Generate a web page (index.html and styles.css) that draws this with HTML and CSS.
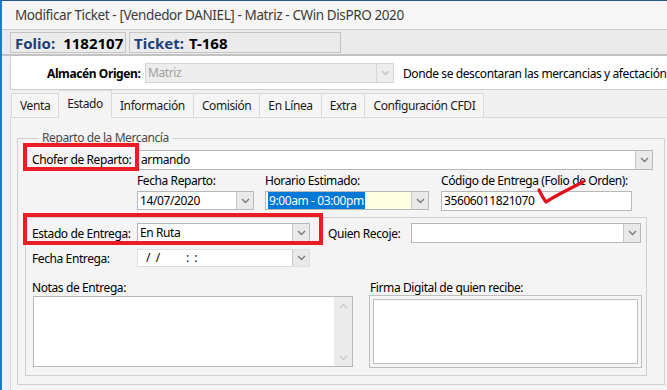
FILE: index.html
```html
<!DOCTYPE html>
<html lang="es">
  <head>
    <meta charset="UTF-8" />
    <title>Modificar Ticket</title>
    <link rel="stylesheet" href="styles.css">
  </head>
  <body>
    <div class="window">
      <div class="title-bar">Modificar Ticket - [Vendedor DANIEL] - Matriz - CWin DisPRO 2020</div>

      <!-- Folio / Ticket -->
      <div class="toolbar">
        <div class="info-box folio"><span class="key">Folio:</span><span class="val">1182107</span></div>
        <div class="info-box ticket"><span class="key">Ticket:</span><span class="val">T-168</span></div>
      </div>

      <!-- Almacen -->
      <div class="almacen-panel">
        <span class="almacen-label">Almacén Origen:</span>
        <div class="combo disabled almacen-combo">
          <span class="combo-text">Matriz</span>
          <span class="combo-btn"><svg width="9" height="6" viewBox="0 0 9 6"><path d="M1 1 L4.5 4.5 L8 1" fill="none" stroke="#c4c4c4" stroke-width="1.4"/></svg></span>
        </div>
        <span class="almacen-note">Donde se descontaran las mercancias y afectación de inventario</span>
      </div>

      <!-- Tabs -->
      <ul class="tabs">
        <li>Venta</li>
        <li class="active">Estado</li>
        <li>Información</li>
        <li>Comisión</li>
        <li>En Línea</li>
        <li>Extra</li>
        <li>Configuración CFDI</li>
      </ul>

      <div class="tab-panel">
        <fieldset class="group reparto">
          <legend>Reparto de la Mercancía</legend>

          <div class="row chofer-row">
            <span class="label">Chofer de Reparto:</span>
            <div class="combo chofer-combo">
              <span class="combo-text">armando</span>
              <span class="combo-btn"><svg width="9" height="6" viewBox="0 0 9 6"><path d="M1 1 L4.5 4.5 L8 1" fill="none" stroke="#7a7a7a" stroke-width="1.4"/></svg></span>
            </div>
          </div>

          <div class="row fecha-row">
            <div class="field fecha-field">
              <span class="label">Fecha Reparto:</span>
              <div class="combo">
                <span class="combo-text">14/07/2020</span>
                <span class="combo-btn"><svg width="9" height="6" viewBox="0 0 9 6"><path d="M1 1 L4.5 4.5 L8 1" fill="none" stroke="#7a7a7a" stroke-width="1.4"/></svg></span>
              </div>
            </div>
            <div class="field horario-field">
              <span class="label">Horario Estimado:</span>
              <div class="combo yellow">
                <span class="combo-text"><span class="selected">9:00am - 03:00pm</span></span>
                <span class="combo-btn"><svg width="9" height="6" viewBox="0 0 9 6"><path d="M1 1 L4.5 4.5 L8 1" fill="none" stroke="#7a7a7a" stroke-width="1.4"/></svg></span>
              </div>
            </div>
            <div class="field codigo-field">
              <span class="label">Código de Entrega (Folio de Orden):</span>
              <div class="textbox">35606011821070</div>
            </div>
          </div>

          <div class="group entrega">
            <div class="row estado-row">
              <span class="label">Estado de Entrega:</span>
              <div class="combo estado-combo">
                <span class="combo-text">En Ruta</span>
                <span class="combo-btn"><svg width="9" height="6" viewBox="0 0 9 6"><path d="M1 1 L4.5 4.5 L8 1" fill="none" stroke="#7a7a7a" stroke-width="1.4"/></svg></span>
              </div>
              <span class="label recoje-label">Quien Recoje:</span>
              <div class="combo recoje-combo">
                <span class="combo-text"></span>
                <span class="combo-btn"><svg width="9" height="6" viewBox="0 0 9 6"><path d="M1 1 L4.5 4.5 L8 1" fill="none" stroke="#7a7a7a" stroke-width="1.4"/></svg></span>
              </div>
            </div>

            <div class="row fecha-entrega-row">
              <span class="label">Fecha Entrega:</span>
              <div class="combo estado-combo">
                <span class="combo-text mask">&nbsp;/ /&nbsp;&nbsp;&nbsp;&nbsp;&nbsp;&nbsp;: :</span>
                <span class="combo-btn"><svg width="9" height="6" viewBox="0 0 9 6"><path d="M1 1 L4.5 4.5 L8 1" fill="none" stroke="#7a7a7a" stroke-width="1.4"/></svg></span>
              </div>
            </div>

            <div class="row notas-row">
              <div class="notas">
                <span class="label">Notas de Entrega:</span>
                <div class="memo">
                  <div class="memo-body"></div>
                  <div class="scrollbar">
                    <svg width="9" height="6" viewBox="0 0 9 6"><path d="M1 5 L4.5 1.5 L8 5" fill="none" stroke="#c8c8c8" stroke-width="1.4"/></svg>
                    <svg width="9" height="6" viewBox="0 0 9 6"><path d="M1 1 L4.5 4.5 L8 1" fill="none" stroke="#c8c8c8" stroke-width="1.4"/></svg>
                  </div>
                </div>
              </div>
              <div class="firma">
                <span class="label">Firma Digital de quien recibe:</span>
                <div class="firma-frame"><div class="firma-pad"></div></div>
              </div>
            </div>
          </div>

          <!-- red annotations drawn over the form -->
          <div class="mark mark-chofer"></div>
          <div class="mark mark-estado"></div>
          <svg class="check" width="52" height="28" viewBox="0 0 52 28">
            <path d="M4 11 C6 15 8 19 11 23 C18 18 30 12 48 3" fill="none" stroke="#e3101c" stroke-width="3.2" stroke-linecap="round" stroke-linejoin="round"/>
          </svg>
        </fieldset>
      </div>
    </div>
  </body>
</html>
```

FILE: styles.css
```css
/* Global */
* {
  margin: 0;
  padding: 0;
  box-sizing: border-box;
}

body {
  width: 667px;
  height: 390px;
  overflow: hidden;
  background-color: #f0f0f0;
  font-family: "Noto Sans", sans-serif;
  font-size: 12px;
  letter-spacing: -0.4px;
  color: #000;
}

.window {
  width: 690px;
  height: 390px;
  border-top: 1px solid #2b5797;
  border-left: 2px solid #1b7bd3;
  background-color: #f0f0f0;
}

/* Title */
.title-bar {
  height: 29px;
  padding-left: 13px;
  line-height: 29px;
  font-size: 13.5px;
  letter-spacing: -0.4px;
  color: #3b3b3b;
  background-color: #f6f6f6;
  border-bottom: 1px solid #c9c9c9;
}

/* Folio / Ticket */
.toolbar {
  display: flex;
  gap: 3px;
  height: 26px;
  padding: 2px 8px 0;
  background-color: #ebebeb;
  border-bottom: 2px solid #c2c2c2;
}

.info-box {
  display: flex;
  align-items: center;
  height: 21px;
  padding-left: 4px;
  border: 1px solid #c4c4c4;
  font-size: 15px;
  font-weight: 700;
  letter-spacing: 0;
}

.info-box .key {
  color: #1d3f7a;
  margin-right: 8px;
}

.folio {
  width: 116px;
}

.ticket {
  width: 212px;
}

.ticket .key {
  margin-right: 5px;
}

/* Almacen */
.almacen-panel {
  display: flex;
  align-items: center;
  height: 34px;
  margin-left: 8px;
  padding-left: 36px;
  background-color: #fff;
  border: 1px solid #cdcdcd;
  border-top: 1px solid #fff;
  white-space: nowrap;
  overflow: hidden;
}

.almacen-label {
  flex-shrink: 0;
  font-weight: 700;
  width: 98px;
}

.almacen-combo {
  flex: 0 0 249px;
  margin-right: 9px;
}

.almacen-note {
  flex-shrink: 0;
}

/* Combos */
.combo {
  display: flex;
  height: 20px;
  background-color: #fff;
  border: 1px solid #b8b8b8;
}

.combo-text {
  flex: 1;
  padding-left: 2px;
  line-height: 18px;
  white-space: nowrap;
  overflow: hidden;
}

.combo-btn {
  display: flex;
  align-items: center;
  justify-content: center;
  width: 17px;
  background-color: #e9e9e9;
  border-left: 1px solid #c8c8c8;
}

.combo.disabled {
  background-color: #ededed;
  border-color: #d6d6d6;
  color: #a2a2a2;
}

.combo.disabled .combo-btn {
  background-color: #ededed;
  border-left-color: #d6d6d6;
}

.combo.yellow {
  background-color: #ffffe1;
}

.selected {
  background-color: #0078d7;
  color: #fff;
  padding: 0 1px;
}

.textbox {
  height: 20px;
  padding-left: 2px;
  line-height: 18px;
  background-color: #fff;
  border: 1px solid #b8b8b8;
}

/* Tabs */
.tabs {
  display: flex;
  list-style: none;
  height: 28px;
  margin-left: 9px;
  padding-top: 3px;
}

.tabs li {
  height: 25px;
  padding: 0 8px;
  line-height: 23px;
  color: #1a1a1a;
  background-color: #f5f5f5;
  border: 1px solid #d9d9d9;
  border-left: none;
  white-space: nowrap;
}

.tabs li:first-child {
  border-left: 1px solid #d9d9d9;
}

.tabs li.active {
  height: 28px;
  margin-top: -3px;
  line-height: 25px;
  background-color: #f4f4f4;
  border-bottom-color: #f4f4f4;
  position: relative;
  z-index: 1;
}

.tab-panel {
  height: 280px;
  margin-left: 8px;
  margin-top: -1px;
  padding: 12px 0 0 6px;
  background-color: #f4f4f4;
  border: 1px solid #d9d9d9;
}

/* Group boxes */
.group {
  border: 1px solid #cfcfcf;
}

.reparto {
  position: relative;
  width: 648px;
  padding: 2px 11px 8px 14px;
}

.reparto legend {
  margin-left: 7px;
  padding: 0 3px;
  line-height: 16px;
  color: #4a4a4a;
}

.row {
  display: flex;
  align-items: center;
}

.label {
  white-space: nowrap;
}

.chofer-row {
  height: 23px;
}

.chofer-row .label {
  width: 106px;
}

.chofer-combo {
  flex: 1;
}

.fecha-row {
  align-items: flex-start;
  margin-left: 105px;
  margin-top: 1px;
}

.field {
  display: flex;
  flex-direction: column;
  gap: 2px;
}

.fecha-field {
  width: 117px;
  margin-right: 11px;
}

.horario-field {
  width: 164px;
  margin-right: 12px;
}

.codigo-field {
  width: 191px;
}

.fecha-field .combo,
.horario-field .combo {
  height: 19px;
}

.entrega {
  width: 622px;
  margin: 6px 0 0 -7px;
  padding: 5px 0 7px 6px;
}

.estado-row .label,
.fecha-entrega-row .label {
  width: 105px;
}

.estado-combo {
  width: 173px;
}

.estado-row .recoje-label {
  width: auto;
  margin: 0 11px 0 18px;
}

.recoje-combo {
  flex: 0 0 230px;
}

.fecha-entrega-row {
  margin-top: 6px;
}

.fecha-entrega-row .combo {
  height: 18px;
  border-color: #dedede;
}

.mask {
  padding-left: 4px;
  line-height: 15px;
  letter-spacing: 1px;
}

.notas-row {
  align-items: flex-start;
  gap: 16px;
  margin-top: 14px;
}

.notas,
.firma {
  display: flex;
  flex-direction: column;
  gap: 1px;
}

.notas .label,
.firma .label {
  line-height: 14px;
}

.memo {
  display: flex;
  width: 320px;
  height: 71px;
  margin-left: 1px;
  border: 1px solid #b8b8b8;
  background-color: #fff;
}

.memo-body {
  flex: 1;
}

.scrollbar {
  display: flex;
  flex-direction: column;
  justify-content: space-between;
  align-items: center;
  width: 18px;
  padding: 6px 0 5px;
  background-color: #ebebeb;
}

.firma .label {
  padding-left: 1px;
}

.firma-frame {
  width: 273px;
  height: 73px;
  margin-top: -1px;
  padding: 3px;
  border: 1px solid #bfbfbf;
}

.firma-pad {
  height: 100%;
  background-color: #fff;
  border: 1px solid #bfbfbf;
}

/* Red annotations */
.mark {
  position: absolute;
  border: 4px solid #ec1c24;
}

.mark-chofer {
  left: 5px;
  top: -3px;
  width: 116px;
  height: 28px;
}

.mark-estado {
  left: 5px;
  top: 67px;
  width: 300px;
  height: 32px;
}

.check {
  position: absolute;
  left: 517px;
  top: 33px;
}
```
